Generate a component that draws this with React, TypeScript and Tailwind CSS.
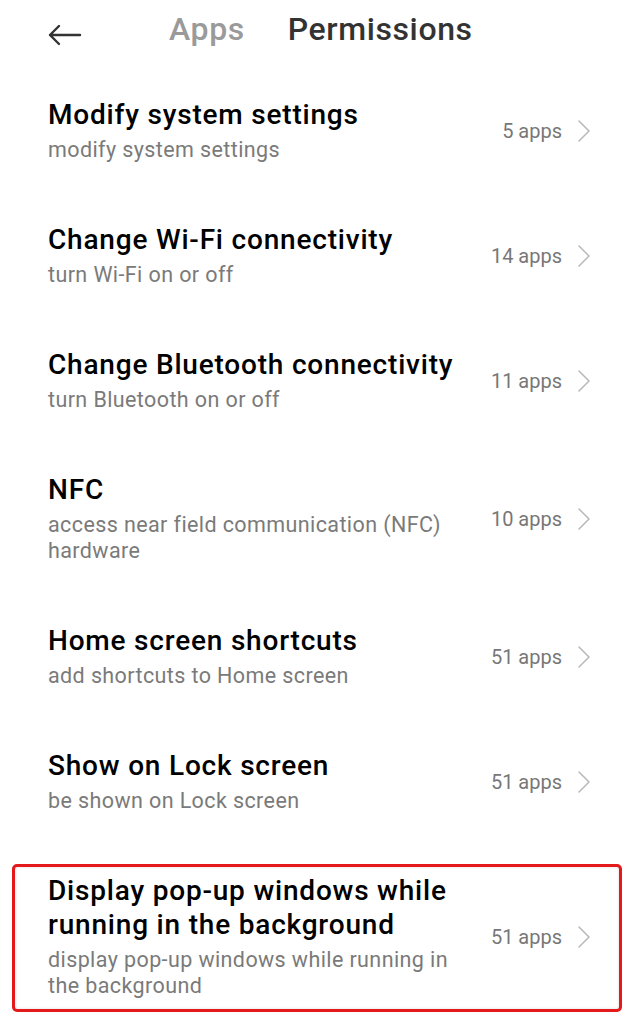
import React from "react";

type Item = { title: string; sub: string; count: string; boxed?: boolean };

const items: Item[] = [
  { title: "Modify system settings", sub: "modify system settings", count: "5 apps" },
  { title: "Change Wi-Fi connectivity", sub: "turn Wi-Fi on or off", count: "14 apps" },
  { title: "Change Bluetooth connectivity", sub: "turn Bluetooth on or off", count: "11 apps" },
  { title: "NFC", sub: "access near field communication (NFC) hardware", count: "10 apps" },
  { title: "Home screen shortcuts", sub: "add shortcuts to Home screen", count: "51 apps" },
  { title: "Show on Lock screen", sub: "be shown on Lock screen", count: "51 apps" },
  {
    title: "Display pop-up windows while running in the background",
    sub: "display pop-up windows while running in the background",
    count: "51 apps",
    boxed: true,
  },
];

function Chevron() {
  return (
    <svg width="14" height="24" viewBox="0 0 14 24" fill="none" className="shrink-0">
      <path d="M2 2 L12 12 L2 22" stroke="#b8b8b8" strokeWidth="1.5" strokeLinecap="round" strokeLinejoin="round" />
    </svg>
  );
}

export default function App() {
  return (
    <div
      className="w-[639px] h-[1024px] overflow-hidden bg-white"
      style={{ fontFamily: "Roboto, 'Noto Sans', sans-serif" }}
    >
      <div className="h-[68px] flex items-start pt-[11px] pl-[48px]">
        <svg width="34" height="22" viewBox="0 0 34 22" fill="none" className="mt-[13px]">
          <path d="M2 11 H32 M11 2 L2 11 L11 20" stroke="#333" strokeWidth="2.4" strokeLinecap="round" strokeLinejoin="round" />
        </svg>
        <div className="ml-[87px] text-[32px] leading-[36px] tracking-[0.6px] font-medium text-[#9a9a9a]">Apps</div>
        <div className="ml-[43px] text-[32px] leading-[36px] tracking-[0.6px] font-medium text-[#333]">Permissions</div>
      </div>
      <div className="flex flex-col">
        {items.map((it, i) => (
          <div key={i} className="relative flex items-center py-[30px] pl-[48px] pr-[48px]">
            {it.boxed && (
              <div className="absolute left-[12px] right-[17px] top-[20px] bottom-[17px] border-[3px] border-[#e3191b] rounded-[5px] shadow-[inset_0_0_3px_rgba(0,0,0,0.15)]" />
            )}
            <div className="flex-1 min-w-0 pr-[28px]">
              <div className="text-[28px] leading-[34px] tracking-[0.8px] font-medium text-black">{it.title}</div>
              <div className="mt-[5px] text-[21.5px] leading-[26px] tracking-[0.4px] text-[#7a7a7a]">{it.sub}</div>
            </div>
            <div className="flex items-center shrink-0">
              <span className="text-[20px] text-[#777]">{it.count}</span>
              <span className="ml-[15px]">
                <Chevron />
              </span>
            </div>
          </div>
        ))}
      </div>
    </div>
  );
}
